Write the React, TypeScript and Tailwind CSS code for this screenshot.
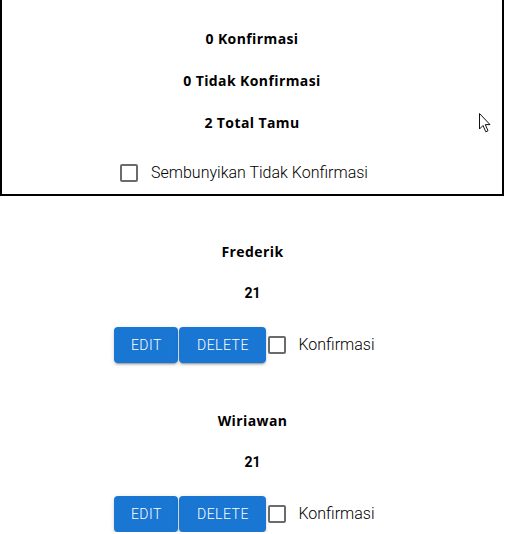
import React from 'react';

const guests = [
    { name: 'Frederik', age: 21 },
    { name: 'Wiriawan', age: 21 },
];

const title = "h-[20px] flex items-center font-['Open_Sans','Noto_Sans',sans-serif] text-[14px] font-bold tracking-[0.4px]";
const btn = "h-[36px] rounded-[4px] bg-[#1976d2] text-white font-['Roboto',sans-serif] font-light text-[14px] tracking-[0.5px] uppercase shadow-[0_3px_1px_-2px_rgba(0,0,0,0.2),0_2px_2px_0_rgba(0,0,0,0.14),0_1px_5px_0_rgba(0,0,0,0.12)]";

function Box() {
    return <span className="w-[18px] h-[18px] rounded-[2px] border-2 border-[#6b6b6b] bg-white shrink-0" />;
}

function Cursor() {
    return (
        <svg className="absolute left-[478px] top-[112px]" width="14" height="22" viewBox="0 0 14 22">
            <path d="M1.5 1.5 L1.5 17 L5 13.5 L7.8 19.8 L10 18.8 L7.3 12.6 L12 12.6 Z" fill="white" stroke="#111" strokeWidth="1" />
        </svg>
    );
}

export default function App() {
    return (
        <div className="relative w-[505px] bg-white text-black">
            {/* Summary */}
            <div className="w-[504px] border-x-2 border-b-2 border-black pt-[28px] pb-[3px] flex flex-col items-center">
                <div className={title}>0 Konfirmasi</div>
                <div className={`${title} mt-[22px]`}>0 Tidak Konfirmasi</div>
                <div className={`${title} mt-[22px]`}>2 Total Tamu</div>
                <label className="h-[36px] mt-[23px] pr-[16px] flex items-center gap-[13px] font-['Roboto',sans-serif] font-light text-[16px] text-black">
                    <Box />
                    <span>Sembunyikan Tidak Konfirmasi</span>
                </label>
            </div>

            {/* Guests */}
            <div className="flex flex-col items-center pt-[45px]">
                {guests.map((g, i) => (
                    <div key={g.name} className={i > 0 ? 'flex flex-col items-center mt-[47px]' : 'flex flex-col items-center'}>
                        <div className={title}>{g.name}</div>
                        <div className="h-[20px] mt-[22px] flex items-center font-['Roboto',sans-serif] text-[14px] font-bold">{g.age}</div>
                        <div className="mt-[24px] pr-[16px] flex items-center">
                            <button className={`${btn} w-[64px]`}>Edit</button>
                            <button className={`${btn} w-[87px] ml-[1px]`}>Delete</button>
                            <label className="ml-[2px] flex items-center gap-[12px] font-['Roboto',sans-serif] font-light text-[16px] text-black">
                                <Box />
                                <span>Konfirmasi</span>
                            </label>
                        </div>
                    </div>
                ))}
            </div>

            <Cursor />
        </div>
    );
}
